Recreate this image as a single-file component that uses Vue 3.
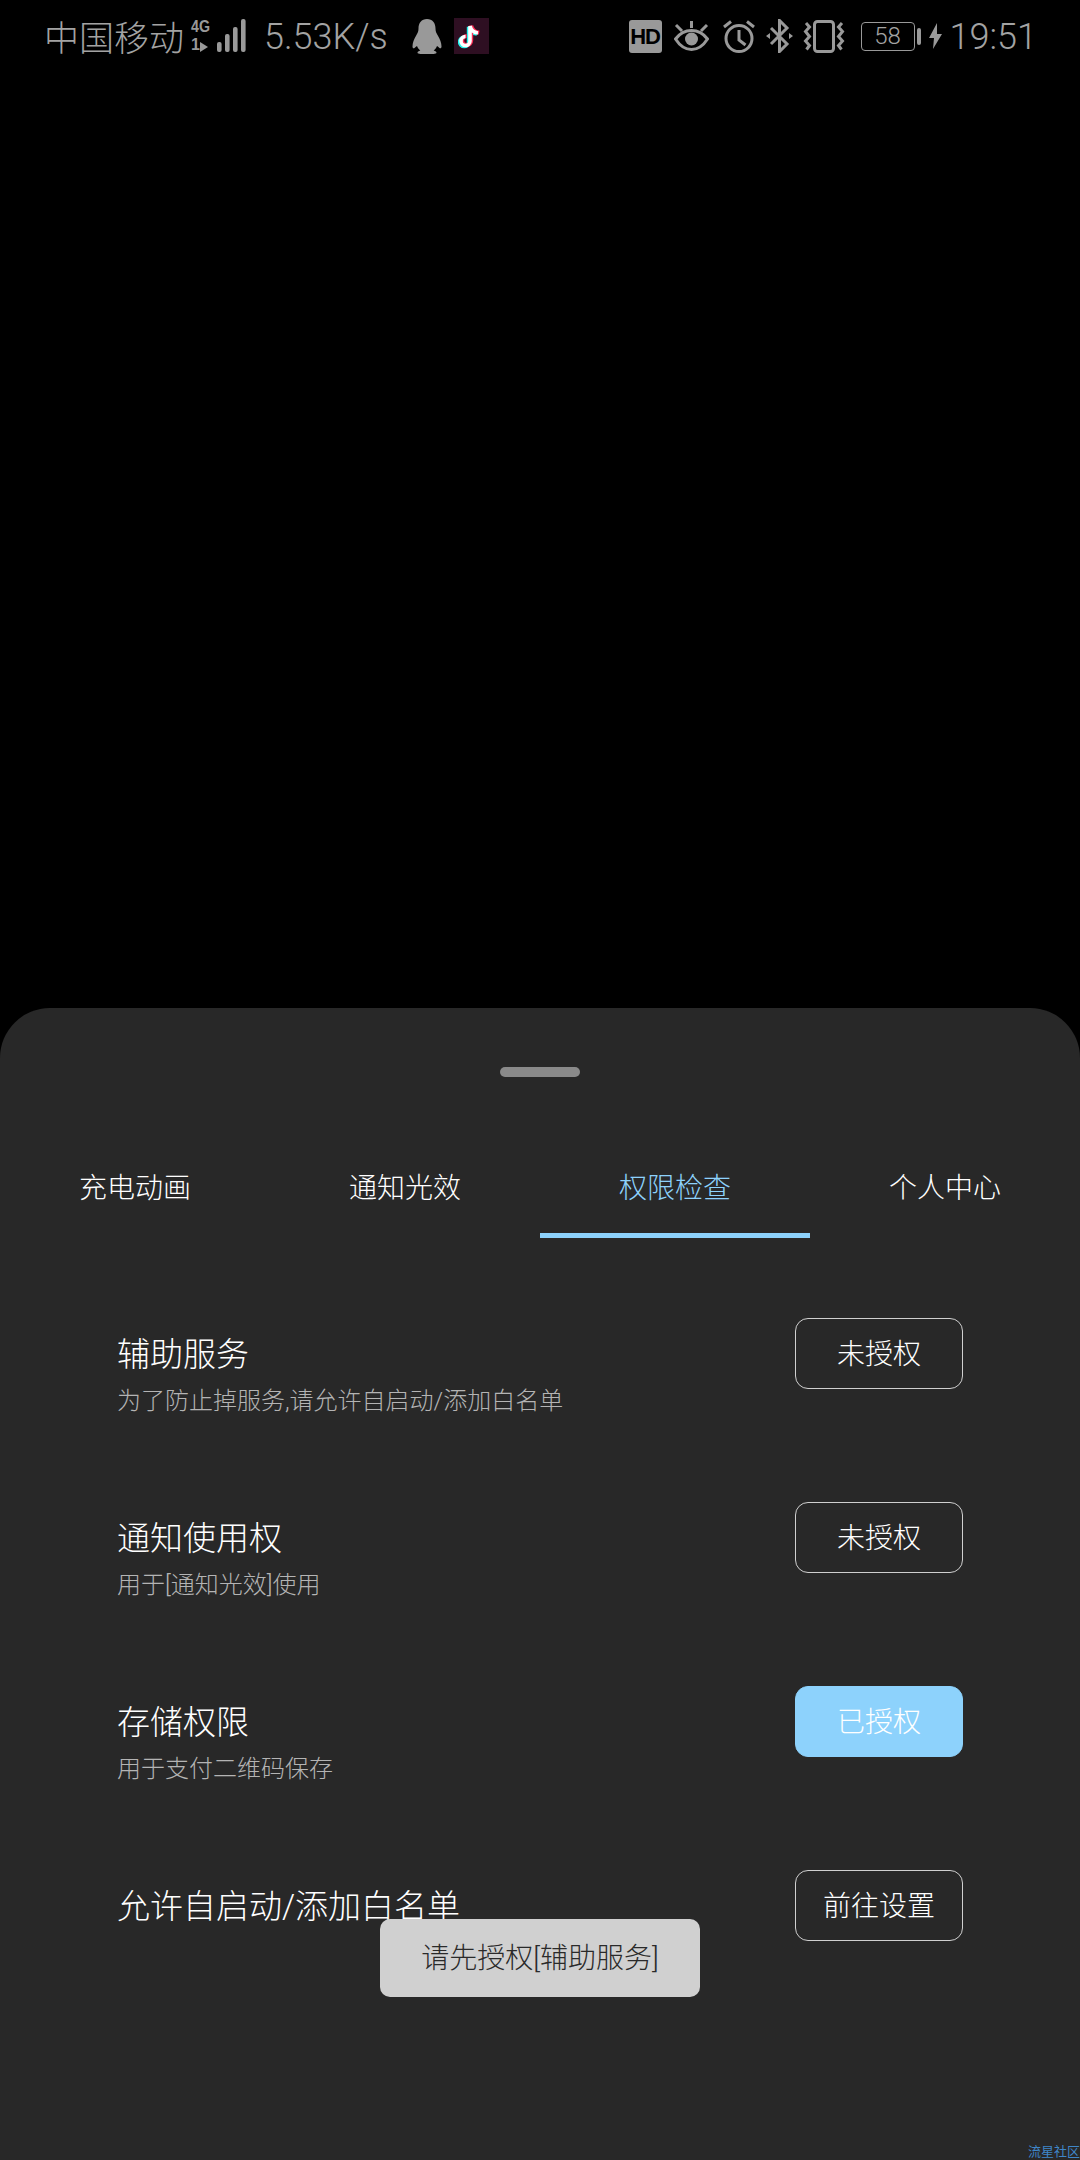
<script setup>
const tabs = [
  { label: '充电动画' },
  { label: '通知光效' },
  { label: '权限检查', active: true },
  { label: '个人中心' }
]

const rows = [
  { title: '辅助服务', desc: '为了防止掉服务,请允许自启动/添加白名单', action: '未授权' },
  { title: '通知使用权', desc: '用于[通知光效]使用', action: '未授权' },
  { title: '存储权限', desc: '用于支付二维码保存', action: '已授权', granted: true },
  { title: '允许自启动/添加白名单', desc: '', action: '前往设置' }
]

const signalBars = [
  { x: 27, h: 10 },
  { x: 35, h: 18 },
  { x: 43, h: 25 },
  { x: 51, h: 33 }
]
</script>

<template>
  <div class="page">
    <header class="status-bar">
      <div class="status-left">
        <span class="carrier">中国移动</span>
        <svg class="signal" width="56" height="34" viewBox="0 0 56 34">
          <text x="1" y="13" class="net-label" textLength="19" lengthAdjust="spacingAndGlyphs">4G</text>
          <text x="1" y="31" class="net-label">1</text>
          <path d="M10 23l8 5-8 5z" fill="#999" />
          <rect v-for="bar in signalBars" :key="bar.x" :x="bar.x" :y="33 - bar.h" width="4.6" :height="bar.h" rx="2" fill="#999" />
        </svg>
        <span class="speed">5.53K/s</span>
        <svg class="qq" width="30" height="35" viewBox="0 0 30 35">
          <path d="M15 0C9.500 0 6.500 4 6.500 9.500c0 2.500-.6 4.300-2.300 7C2 20 .5 24 .5 27.500c0 1.800 1.100 2.200 2.300 1.200.8-.7 1.400-1.400 2.200-1.700.6 1.800 1.800 3.300 3.300 4.500-1.800.6-2.800 1.200-2.800 2.100 0 1 1.200 1.400 3 1.400h13c1.800 0 3-.4 3-1.400 0-.9-1-1.500-2.800-2.100 1.500-1.200 2.700-2.700 3.300-4.500.8.3 1.400 1 2.200 1.700 1.200 1 2.300.6 2.300-1.200 0-3.500-1.500-7.500-3.700-11-1.700-2.700-2.300-4.500-2.300-7C23.500 4 20.500 0 15 0z" fill="#999" />
        </svg>
        <div class="tiktok">
          <svg width="26" height="28" viewBox="0 0 26 28">
            <path d="M12 4v15a4.500 4.500 0 1 1-4.500-4.500M12 4c1 4.500 3.500 6.500 8 7" fill="none" stroke="#25f4ee" stroke-width="4" transform="translate(-1.200 .8)" />
            <path d="M12 4v15a4.500 4.500 0 1 1-4.500-4.500M12 4c1 4.500 3.500 6.500 8 7" fill="none" stroke="#fe2c55" stroke-width="4" transform="translate(1.200 -.4)" />
            <path d="M12 4v15a4.500 4.500 0 1 1-4.500-4.500M12 4c1 4.500 3.500 6.500 8 7" fill="none" stroke="#fff" stroke-width="3.600" />
          </svg>
        </div>
      </div>
      <div class="status-right">
        <span class="hd">HD</span>
        <svg class="ic-eye" width="35" height="30" viewBox="0 0 35 30">
          <path d="M1.500 18C6 12 11 9.500 17.500 9.500S29 12 33.500 18C29 25 24 28.500 17.500 28.500S6 25 1.500 18z" fill="none" stroke="#999" stroke-width="3" />
          <circle cx="17.500" cy="18" r="6.500" fill="#999" />
          <path d="M2 4l6 6M17.500 0v7M33 4l-6 6" stroke="#999" stroke-width="3" fill="none" />
        </svg>
        <svg class="ic-alarm" width="32" height="33" viewBox="0 0 32 33">
          <circle cx="16" cy="18.500" r="13" fill="none" stroke="#999" stroke-width="3" />
          <path d="M16 10v10l6.500 5M1 7l7-5.500M31 7l-7-5.500" fill="none" stroke="#999" stroke-width="3" />
        </svg>
        <svg class="ic-bt" width="27" height="34" viewBox="0 0 27 34">
          <path d="M5 9l16 16-7.500 7.500V1.500L21 9 5 25" fill="none" stroke="#999" stroke-width="3" />
          <path d="M0 17l4-3v6zM27 17l-4-3v6z" fill="#999" />
        </svg>
        <svg class="ic-vib" width="42" height="33" viewBox="0 0 42 33">
          <rect x="11.500" y="1.500" width="19" height="30" rx="3" fill="none" stroke="#999" stroke-width="3" />
          <path d="M3 3l3.500 4-4 4.500 4 5-4 4.500 4 4.500-3 4M39 3l-3.500 4 4 4.500-4 5 4 4.500-4 4.500 3 4" fill="none" stroke="#999" stroke-width="3" />
        </svg>
        <div class="battery">
          <span class="battery-body">58</span>
          <span class="battery-cap"></span>
        </div>
        <svg class="ic-bolt" width="13" height="26" viewBox="0 0 13 26">
          <path d="M8 0L0 15h5l-1 11 9-15H8z" fill="#999" />
        </svg>
        <span class="clock">19:51</span>
      </div>
    </header>

    <div class="spacer"></div>

    <section class="sheet">
      <div class="handle"></div>
      <nav class="tabs">
        <div v-for="tab in tabs" :key="tab.label" class="tab" :class="{ active: tab.active }">{{ tab.label }}</div>
      </nav>
      <div class="list">
        <div v-for="row in rows" :key="row.title" class="row">
          <div class="row-text">
            <div class="row-title">{{ row.title }}</div>
            <div v-if="row.desc" class="row-desc">{{ row.desc }}</div>
          </div>
          <div class="row-btn" :class="{ granted: row.granted }">{{ row.action }}</div>
        </div>
      </div>
      <div class="toast">请先授权[辅助服务]</div>
      <div class="watermark">流星社区</div>
    </section>
  </div>
</template>

<style>
html, body {
  margin: 0;
  background: #000;
}
</style>

<style scoped>
.page {
  width: 1080px;
  height: 2160px;
  background: #000;
  display: flex;
  flex-direction: column;
  overflow: hidden;
  font-family: Roboto, "Noto Sans CJK SC", sans-serif;
}

.status-bar {
  height: 72px;
  padding: 0 43px 0 44px;
  display: flex;
  justify-content: space-between;
  align-items: center;
  color: #a3a3a3;
}

.status-left,
.status-right {
  display: flex;
  align-items: center;
}

.carrier {
  font-size: 35px;
  font-weight: 300;
  margin-top: -2px;
}

.signal {
  margin-left: 6px;
}

.net-label {
  font-family: "Liberation Sans", sans-serif;
  font-size: 16px;
  font-weight: 700;
  fill: #999;
}

.speed {
  margin-left: 18px;
  margin-top: 2px;
  font-size: 36px;
  font-weight: 300;
}

.qq {
  margin-left: 24px;
}

.tiktok {
  width: 35px;
  height: 36px;
  margin-left: 12px;
  background: #2e0f22;
  display: flex;
  align-items: center;
  justify-content: center;
}

.hd {
  width: 33px;
  height: 33px;
  border-radius: 3px;
  background: #999;
  color: #000;
  font-family: "Liberation Sans", sans-serif;
  font-size: 22px;
  font-weight: 700;
  line-height: 33px;
  text-align: center;
  letter-spacing: -1px;
}

.ic-eye {
  margin-left: 12px;
}

.ic-alarm {
  margin-left: 14px;
}

.ic-bt {
  margin-left: 11px;
}

.ic-vib {
  margin-left: 10px;
}

.battery {
  margin-left: 16px;
  display: flex;
  align-items: center;
  gap: 2px;
}

.battery-body {
  width: 54px;
  height: 29px;
  box-sizing: border-box;
  border: 1px solid #999;
  border-radius: 4px;
  font-size: 24px;
  font-weight: 300;
  line-height: 27px;
  text-align: center;
}

.battery-cap {
  width: 4px;
  height: 17px;
  background: #999;
  border-radius: 2px;
}

.ic-bolt {
  margin-left: 8px;
}

.clock {
  margin-left: 8px;
  margin-top: 2px;
  font-size: 36px;
  font-weight: 300;
}

.spacer {
  height: 936px;
  flex: none;
}

.sheet {
  position: relative;
  flex: 1;
  background: #282828;
  border-radius: 50px 50px 0 0;
}

.handle {
  width: 80px;
  height: 10px;
  margin: 59px auto 0;
  background: #8a8a8a;
  border-radius: 5px;
}

.tabs {
  display: flex;
  margin-top: 77px;
}

.tab {
  flex: 1;
  height: 84px;
  box-sizing: border-box;
  padding-top: 15px;
  color: #fff;
  font-size: 28px;
  font-weight: 300;
  line-height: 40px;
  text-align: center;
}

.tab.active {
  color: #8dd2fc;
  border-bottom: 5px solid #8dd2fc;
}

.list {
  margin-top: 80px;
  padding: 0 117px;
  display: flex;
  flex-direction: column;
  gap: 113px;
}

.row {
  height: 71px;
  display: flex;
  justify-content: space-between;
  align-items: flex-start;
}

.row-title {
  padding-top: 14px;
  color: #fff;
  font-size: 33px;
  font-weight: 300;
  line-height: 46px;
}

.row-desc {
  margin-top: 6px;
  color: #b4b4b4;
  font-size: 24px;
  font-weight: 300;
  line-height: 34px;
}

.row-btn {
  width: 168px;
  height: 71px;
  box-sizing: border-box;
  border: 1px solid #d0d0d0;
  border-radius: 13px;
  color: #fff;
  font-size: 28px;
  font-weight: 300;
  line-height: 71px;
  text-align: center;
}

.row-btn.granted {
  background: #8dd2fc;
  border-color: #8dd2fc;
}

.toast {
  position: absolute;
  left: 380px;
  top: 911px;
  width: 320px;
  height: 78px;
  border-radius: 10px;
  background: #d0d0d0;
  color: #2a2a2a;
  font-size: 28px;
  font-weight: 300;
  line-height: 80px;
  text-align: center;
}

.watermark {
  position: absolute;
  right: 0;
  bottom: 0;
  color: #3f86c8;
  font-size: 13px;
  line-height: 16px;
}
</style>
